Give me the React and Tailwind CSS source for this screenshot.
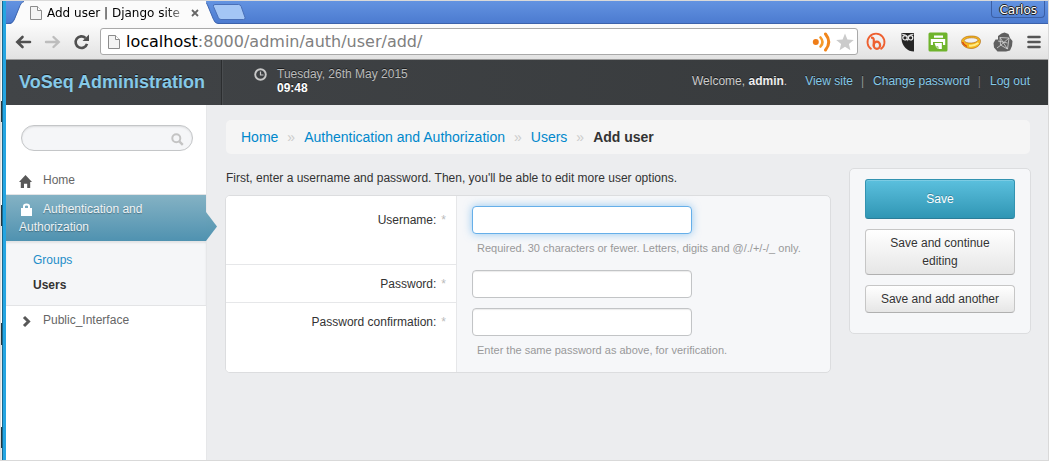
import React from "react";

const PageIcon = ({ className }) => (
  <svg viewBox="0 0 12 14" className={className} aria-hidden="true">
    <path d="M1 .5h6.5l4 4v9H.5V.5z" fill="#f4f4f4" stroke="#8c8c8c" />
    <path d="M7.5.5v4h4" fill="#fff" stroke="#8c8c8c" />
  </svg>
);

function TabStrip() {
  return (
    <div className="flex h-[23px] items-start border-b border-[#3c62ab] bg-linear-to-b from-[#6393e1] to-[#4c7bd0]">
      <svg viewBox="0 0 18 23" className="h-[23px] w-[18px] shrink-0" aria-hidden="true">
        <path d="M0 23.500C6 23.500 7 22 8.500 18.500L14 4.500Q15.500.500 18 .500V23.500z" fill="#fbfbfb" />
        <path d="M0 22.500C6 22.500 7 21 8.500 18L14 4.500Q15.500.500 18 .500" fill="none" stroke="#3f66b0" />
      </svg>
      <div className="-mb-px flex h-[23px] w-[182px] shrink-0 items-center bg-[#fbfbfb] pl-[6px]">
        <PageIcon className="h-[14px] w-[12px] shrink-0" />
        <span className="ml-[5px] w-[134px] overflow-hidden whitespace-nowrap bg-linear-to-r from-black from-85% to-[#999] bg-clip-text font-['DejaVu_Sans',sans-serif] text-[12px] leading-[18px] text-transparent">
          Add user | Django site
        </span>
        <button aria-label="Close tab" className="ml-[10px] flex">
          <svg viewBox="0 0 8 8" className="h-[8px] w-[8px]">
            <path d="M1 1l6 6M7 1L1 7" stroke="#666" strokeWidth="1.8" />
          </svg>
        </button>
      </div>
      <svg viewBox="0 0 12 23" className="h-[23px] w-[12px] shrink-0" aria-hidden="true">
        <path d="M0 .5L7.500 18.500Q9 22.500 12 22.500V23H0z" fill="#fbfbfb" />
        <path d="M-1 .5Q0 .5 1.500 4L7.500 18.500Q9 22.500 12 22.500" fill="none" stroke="#3f66b0" />
      </svg>
      <button aria-label="New tab" className="-ml-[6px] mt-[3px] flex">
        <svg viewBox="0 0 34 16" className="h-[16px] w-[34px]">
          <path d="M3 .5H26.500Q28.500.5 29.200 2.500L33 13.500Q33.500 15.500 31.500 15.500H9Q7 15.500 6.300 13.500L1.500 2.500Q.800.5 3 .5z" fill="#a4c6f5" stroke="#4a70b8" />
        </svg>
      </button>
      <span className="ml-auto mr-[3px] h-[17px] rounded-b border border-t-0 border-[#3b5fa5] px-[7px] pt-px font-['DejaVu_Sans',sans-serif] text-[12px] leading-[16px] text-white [text-shadow:1px_0_#222,-1px_0_#222,0_1px_#222,0_-1px_#222]">
        Carlos
      </span>
    </div>
  );
}

function Extensions() {
  return (
    <div className="ml-[8px] mr-[7px] flex shrink-0 items-center gap-[13px]">
      <svg viewBox="0 0 20 20" className="mr-[2px] h-[20px] w-[20px]" aria-hidden="true">
        <path d="M5.500 17.300A8.500 8.500 0 1 1 14.500 17.300" fill="none" stroke="#ee6030" strokeWidth="1.800" />
        <path d="M5 5.800Q7.800 5.200 7.800 8v6.500" fill="none" stroke="#ee6030" strokeWidth="2.200" />
        <ellipse cx="10.900" cy="13.300" rx="3.200" ry="3.600" fill="none" stroke="#ee6030" strokeWidth="2.200" />
      </svg>
      <svg viewBox="0 0 14 20" className="h-[20px] w-[14px]" aria-hidden="true">
        <path d="M.5 1H13v18.500q-5 0-8.500-3.500T.5 7z" fill="#262626" />
        <circle cx="4" cy="5.800" r="2.200" fill="#262626" stroke="#eee" strokeWidth="1.200" />
        <circle cx="9.600" cy="5.800" r="2.200" fill="#262626" stroke="#eee" strokeWidth="1.200" />
        <path d="M1 2.200q4 .3 5.800 2.300Q8.500 2.500 12.500 2.200" fill="none" stroke="#ddd" strokeWidth="1" />
        <path d="M5.800 7h2l-1 2.500z" fill="#eee" />
      </svg>
      <svg viewBox="0 0 20 20" className="h-[20px] w-[20px]" aria-hidden="true">
        <rect x=".5" y=".5" width="19" height="19" rx="1.500" fill="#6fb42c" />
        <path d="M6 3.500h9v2.300H6zM2.800 7h14.400v6H15v-3H5v3H2.800z" fill="#fff" />
        <path d="M6.500 11h7.300v6H9.800L8 15z" fill="#fff" />
        <path d="M8 15l2-.3v2.300" fill="none" stroke="#6fb42c" strokeWidth=".8" />
      </svg>
      <svg viewBox="0 0 20 20" className="h-[20px] w-[20px]" aria-hidden="true">
        <path
          d="M.5 9.500C.5 6 5 4 10.500 4s9 2 9 5.200c0 4-4 7.300-9.500 7.300S.5 13 .5 9.500zM3 8.500C4 10.500 7 11.200 10.500 11s6-1.500 6.800-3C16 6.300 13.500 5.800 10.500 5.800S4.500 6.500 3 8.500z"
          fill="#f7b81c"
          fillRule="evenodd"
          stroke="#a8620c"
          strokeWidth=".6"
        />
        <path d="M8 13.500q5 .8 9.500-2.500" fill="none" stroke="#ffec85" strokeWidth="2" />
        <path d="M1.500 10q1 3 4.500 4.500" fill="none" stroke="#d8421a" strokeWidth="1.300" />
      </svg>
      <svg viewBox="0 0 20 20" className="-ml-px h-[20px] w-[20px]" aria-hidden="true">
        <path d="M5 4l3.500-2.500L11.500.5 15.500 2l1.500 4 2.500 3-.5 5-2 4.500-4 1H4.500L1 15.500.5 11l2-3.500H5z" fill="#606060" />
        <path d="M7 5.500l9 .5-1.500 11-7-4zM7 5.500l7.500 11.500M16 6l-8 7M4 16l4-3M5 9l9.500 2" fill="none" stroke="#d5d5d5" strokeWidth=".8" />
      </svg>
      <button aria-label="Menu" className="ml-[1px] flex">
        <svg viewBox="0 0 14 14" className="h-[14px] w-[14px]">
          <path d="M1.500 2h11M1.500 7h11M1.500 12h11" stroke="#555" strokeWidth="2.600" strokeLinecap="round" />
        </svg>
      </button>
    </div>
  );
}

function Toolbar() {
  return (
    <div className="flex h-[36px] items-center border-b border-[#9a9a9a] bg-linear-to-b from-[#fbfbfb] to-[#e2e2e2] pl-[9px]">
      <button aria-label="Back" className="flex">
        <svg viewBox="0 0 17 14" className="h-[14px] w-[17px]">
          <path d="M15 7H3M7.500 2L2.300 7l5.200 5" fill="none" stroke="#505050" strokeWidth="2.600" strokeLinecap="round" />
        </svg>
      </button>
      <button aria-label="Forward" className="ml-[12px] flex">
        <svg viewBox="0 0 17 14" className="h-[14px] w-[17px]">
          <path d="M2 7h12M9.500 2l5.200 5-5.200 5" fill="none" stroke="#bdbdbd" strokeWidth="2.400" strokeLinecap="round" />
        </svg>
      </button>
      <button aria-label="Reload" className="ml-[12px] flex">
        <svg viewBox="0 0 17 16" className="h-[16px] w-[17px]">
          <path d="M12.500 4A5.800 5.800 0 1 0 14 9.800" fill="none" stroke="#505050" strokeWidth="2.600" />
          <path d="M16 .500V7H9.500z" fill="#505050" />
        </svg>
      </button>
      <div className="ml-[10px] flex h-[27px] min-w-0 flex-1 items-center rounded-[3px] border border-[#a9a9a9] bg-white pl-[7px] pr-[3px]">
        <PageIcon className="h-[16px] w-[12px] shrink-0" />
        <div className="ml-[6px] flex-1 truncate font-['DejaVu_Sans',sans-serif] text-[16px] leading-[22px] text-[#808080]">
          <span className="text-black">localhost</span>:8000/admin/auth/user/add/
        </div>
        <svg viewBox="0 0 20 20" className="h-[20px] w-[20px] shrink-0" aria-hidden="true">
          <circle cx="3.800" cy="10" r="3" fill="#ef7d17" />
          <path d="M8.500 5.500q4 4.500 0 9" fill="none" stroke="#f59a2a" strokeWidth="2.600" strokeLinecap="round" />
          <path d="M13.500 2q6.500 8 0 16" fill="none" stroke="#f0851b" strokeWidth="3" strokeLinecap="round" />
        </svg>
        <svg viewBox="0 0 18 18" className="ml-[4px] h-[18px] w-[18px] shrink-0" aria-hidden="true">
          <path d="M9 .5l2.400 5.900 6.400.500-4.900 4.100 1.500 6.200L9 13.800l-5.400 3.400 1.500-6.200L.2 6.900l6.400-.5z" fill="#cbcbcb" />
        </svg>
      </div>
      <Extensions />
    </div>
  );
}

const headerLink = "text-[#85c9e8] hover:underline";

function Header() {
  return (
    <header className="flex h-[45px] items-stretch bg-linear-to-r from-[#414447] to-[#36393b] text-[12px] leading-[14px] [text-shadow:0_-1px_#1c1e20]">
      <h1 className="flex w-[216px] shrink-0 items-center border-r border-[#2b2d2f] pb-[2px] pl-[13px] text-[18px] font-bold text-[#85c9e8]">
        VoSeq Administration
      </h1>
      <div className="flex border-l border-[#4a4d50] pl-[31px] pt-[7px]">
        <svg viewBox="0 0 13 13" className="mt-[1px] h-[13px] w-[13px]" aria-hidden="true">
          <circle cx="6.500" cy="6.500" r="5.300" fill="none" stroke="#c8c8c8" strokeWidth="1.900" />
          <path d="M6.500 3.500v3.500h3" fill="none" stroke="#c8c8c8" strokeWidth="1.200" />
        </svg>
        <div className="ml-[10px] text-[#bbb]">
          <div>Tuesday, 26th May 2015</div>
          <div className="font-bold text-white">09:48</div>
        </div>
      </div>
      <nav className="ml-auto flex items-center pb-[3px] pr-[18px] text-[#ccc]">
        <span>
          Welcome, <strong className="text-[#eee]">admin</strong>.
        </span>
        <a href="#view" className={`ml-[18px] ${headerLink}`}>View site</a>
        <span className="ml-[8px] mr-[9px] text-[#999]">|</span>
        <a href="#password" className={headerLink}>Change password</a>
        <span className="ml-[8px] mr-[9px] text-[#777]">|</span>
        <a href="#logout" className={headerLink}>Log out</a>
      </nav>
    </header>
  );
}

function Sidebar() {
  return (
    <aside className="w-[201px] shrink-0 border-r border-[#e6e7e9] bg-white pt-[20px]">
      <form className="ml-[15px] mr-[13px] flex h-[26px] items-center rounded-full border border-[#c4c6c8] bg-[#f5f6f8] pl-[12px] pr-[8px] shadow-[inset_0_1px_2px_rgba(0,0,0,0.1)]">
        <input type="search" aria-label="Search" className="min-w-0 flex-1 bg-transparent text-[12px] outline-none" />
        <button type="button" aria-label="Search" className="flex">
          <svg viewBox="0 0 13 13" className="mt-[2px] h-[13px] w-[13px]">
            <circle cx="5.300" cy="5.300" r="4" fill="none" stroke="#c4c4c4" strokeWidth="2" />
            <path d="M8.300 8.300l3.500 3.500" stroke="#c4c4c4" strokeWidth="2.400" />
          </svg>
        </button>
      </form>
      <ul className="mt-[15px] leading-[18px] text-[#666]">
        <li className="border-b border-[#e3e4e6]">
          <a href="#home" className="flex items-center px-[13px] py-[5px]">
            <svg viewBox="0 0 13 13" className="mt-[2px] h-[13px] w-[13px]" aria-hidden="true">
              <path d="M6.500 0L13 7h-1.800v6H8.200V8.800H5V13H1.800V7H0z" fill="#585858" />
            </svg>
            <span className="ml-[11px]">Home</span>
          </a>
        </li>
        <li>
          <a href="#auth" className="relative block bg-linear-to-b from-[#84b2c4] to-[#4f92b0] py-[5px] pl-[13px] pr-[40px] text-white/90 [text-shadow:0_1px_1px_rgba(0,0,0,0.3)]">
            <svg viewBox="0 0 13 13" className="ml-[1px] mr-[10px] inline-block h-[13px] w-[13px]" aria-hidden="true">
              <path d="M1 5h11v8H1z" fill="#fff" />
              <path d="M4 5.500V3Q4 1.500 6.500 1.500T9 3v2.500" fill="none" stroke="#fff" strokeWidth="2" />
            </svg>
            Authentication and Authorization
            <span className="absolute bottom-0 left-full h-[29px] w-[11px] bg-linear-to-b from-[#70a6bb] to-[#4f92b0] [clip-path:polygon(0_0,100%_50%,0_100%)]" />
          </a>
          <ul className="flex flex-col gap-[7px] border-b border-[#e3e4e6] bg-[#f5f6f8] pb-[11px] pl-[27px] pt-[10px] shadow-[inset_0_2px_2px_rgba(0,0,0,0.08)]">
            <li><a href="#groups" className="text-[#1e8dc8]">Groups</a></li>
            <li><a href="#users" className="font-bold text-[#333]">Users</a></li>
          </ul>
        </li>
        <li>
          <a href="#public" className="flex items-center px-[13px] py-[5px]">
            <svg viewBox="0 0 13 13" className="mt-[2px] h-[13px] w-[13px]" aria-hidden="true">
              <path d="M5 2l4.500 4.500L5 11" fill="none" stroke="#585858" strokeWidth="3" />
            </svg>
            <span className="ml-[11px]">Public_Interface</span>
          </a>
        </li>
      </ul>
    </aside>
  );
}

function Field({ id, label, type = "text", help, first, last, focused }) {
  const inputLook = focused
    ? "border-[#66afe9] shadow-[0_0_8px_rgba(82,168,236,0.6)]"
    : "border-[#c2c4c6] shadow-[inset_0_1px_1px_rgba(0,0,0,0.08)]";
  return (
    <div className="grid grid-cols-[231px_1fr]">
      <div
        className={`border-r border-r-[#e6e7e9] bg-white pr-[10px] text-right ${
          first ? "pt-[15px]" : "pt-[10px]"
        } ${last ? "" : "border-b border-b-[#e6e7e9]"}`}
      >
        <label htmlFor={id} className="flex justify-end gap-[5px]">
          {label}: <span className="text-[#bbb]">*</span>
        </label>
      </div>
      <div className={`pl-[15px] ${first ? "pt-[10px]" : "pt-[5px]"} ${last ? "pb-[13px]" : first ? "pb-[8px]" : "pb-[5px]"}`}>
        <input
          id={id}
          type={type}
          className={`block h-[28px] w-[220px] rounded-[4px] border bg-white px-2 outline-none ${inputLook}`}
        />
        {help && <p className="ml-[5px] mt-[5px] text-[11px] text-[#999]">{help}</p>}
      </div>
    </div>
  );
}

const plainButton =
  "rounded-[4px] border border-[#c6c6c6] border-b-[#b0b0b0] bg-linear-to-b from-white to-[#e6e6e6] px-[12px] py-[4px] [text-shadow:0_1px_1px_rgba(255,255,255,0.75)]";

function Main() {
  return (
    <main className="min-w-0 flex-1 bg-[#ecedef] pl-[18px] pr-[17px] pt-[15px]">
      <nav aria-label="Breadcrumb" className="mx-px rounded-[5px] bg-[#f5f5f5] px-[15px] py-[7px] text-[14px] leading-[20px]">
        <ol className="flex gap-[9px] text-[#0088cc]">
          <li><a href="#home">Home</a></li>
          <li className="text-[#ccc]">»</li>
          <li><a href="#auth">Authentication and Authorization</a></li>
          <li className="text-[#ccc]">»</li>
          <li><a href="#users">Users</a></li>
          <li className="text-[#ccc]">»</li>
          <li className="font-bold text-[#333]">Add user</li>
        </ol>
      </nav>
      <form className="mt-[14px] flex items-start gap-[18px]">
        <div className="min-w-0 flex-1">
          <p className="mb-[8px] ml-px mt-[1px]">
            First, enter a username and password. Then, you'll be able to edit more user options.
          </p>
          <div className="overflow-hidden rounded-[5px] border border-[#dcdddf] bg-[#f6f7f9]">
            <Field id="username" label="Username" first focused help="Required. 30 characters or fewer. Letters, digits and @/./+/-/_ only." />
            <Field id="password1" label="Password" type="password" />
            <Field id="password2" label="Password confirmation" type="password" last help="Enter the same password as above, for verification." />
          </div>
        </div>
        <div className="flex w-[182px] shrink-0 flex-col gap-[10px] rounded-[5px] border border-[#dcdddf] bg-[#f6f7f9] px-[15px] pb-[20px] pt-[10px]">
          <button
            type="button"
            className="h-[40px] rounded-[3px] border border-[#3393b1] border-b-[#2b7d98] bg-linear-to-b from-[#5bc0de] to-[#2f96b4] text-white shadow-[inset_0_1px_0_rgba(255,255,255,0.2)] [text-shadow:0_-1px_rgba(0,0,0,0.25)]"
          >
            Save
          </button>
          <button type="button" className={plainButton}>Save and continue editing</button>
          <button type="button" className={plainButton}>Save and add another</button>
        </div>
      </form>
    </main>
  );
}

export default function App() {
  return (
    <div className="flex min-h-screen border border-[#d9d9d9] font-['Liberation_Sans',Arial,sans-serif] text-[12px] leading-[18px] text-[#333]">
      <div className="w-px shrink-0 bg-[linear-gradient(to_bottom,#e4e6e7_0px,#fff_100px,#26383f_100px,#26383f_121px,#e4e6e7_121px,#fff_204px,#26383f_204px,#26383f_225px,#e4e6e7_225px,#fff_322px,#26383f_322px,#26383f_344px,#e4e6e7_344px,#fff_426px,#26383f_426px,#26383f_447px,#e4e6e7_447px)]" />
      <div className="w-[4px] shrink-0 border-l border-[#17688f] bg-[#25a5e2]" />
      <div className="flex min-w-0 flex-1 flex-col">
        <TabStrip />
        <Toolbar />
        <Header />
        <div className="flex flex-1">
          <Sidebar />
          <Main />
        </div>
      </div>
    </div>
  );
}
